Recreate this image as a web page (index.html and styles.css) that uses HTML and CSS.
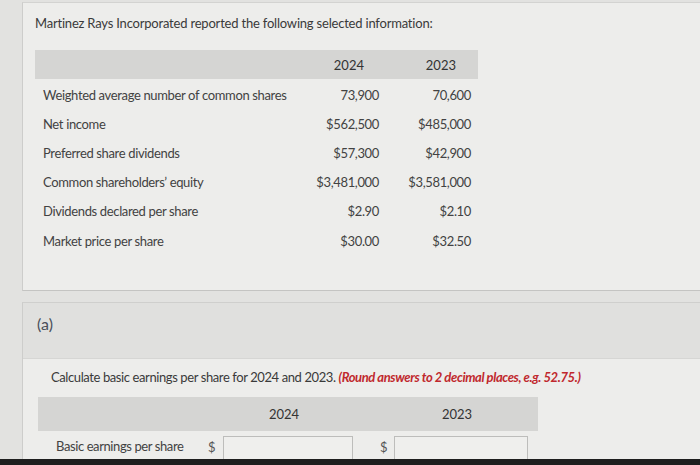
FILE: index.html
```html
<!DOCTYPE html>
<html>
<head>
<meta charset="utf-8">
<link rel="stylesheet" href="styles.css">
</head>
<body>
<div class="page">
  <div class="card info">
    <p class="title">Martinez Rays Incorporated reported the following selected information:</p>
    <div class="data">
      <div class="hdr"></div>
      <div class="hdr num h2024">2024</div>
      <div class="hdr num h2023">2023</div>

      <div class="lbl">Weighted average number of common shares</div>
      <div class="val v1">73,900</div>
      <div class="val v2">70,600</div>

      <div class="lbl">Net income</div>
      <div class="val v1">$562,500</div>
      <div class="val v2">$485,000</div>

      <div class="lbl">Preferred share dividends</div>
      <div class="val v1">$57,300</div>
      <div class="val v2">$42,900</div>

      <div class="lbl">Common shareholders’ equity</div>
      <div class="val v1">$3,481,000</div>
      <div class="val v2">$3,581,000</div>

      <div class="lbl">Dividends declared per share</div>
      <div class="val v1">$2.90</div>
      <div class="val v2">$2.10</div>

      <div class="lbl">Market price per share</div>
      <div class="val v1">$30.00</div>
      <div class="val v2">$32.50</div>
    </div>
  </div>

  <div class="card part">
    <div class="part-head">(a)</div>
    <div class="part-body">
      <p class="question">Calculate basic earnings per share for 2024 and 2023. <em class="hint">(Round answers to 2 decimal places, e.g. 52.75.)</em></p>
      <div class="answer">
        <div class="ahdr span2"></div>
        <div class="ahdr ayear">2024</div>
        <div class="ahdr span2"></div>
        <div class="ahdr ayear">2023</div>
        <div class="ahdr"></div>

        <div class="alabel">Basic earnings per share</div>
        <div class="dollar">$</div>
        <div class="box"></div>
        <div></div>
        <div class="dollar">$</div>
        <div class="box"></div>
        <div></div>
      </div>
    </div>
  </div>
</div>
<div class="bezel"></div>
</body>
</html>
```

FILE: styles.css
```css
html, body {
  margin: 0;
  padding: 0;
  height: 465px;
  overflow: hidden;
}
body {
  background: #e2e2e0;
  font-family: Lato, "Open Sans", sans-serif;
  color: #3f3f3f;
}
.page {
  padding: 2px 0 0 22px;
  display: flex;
  flex-direction: column;
  gap: 11px;
}
.card {
  background: #ededeb;
  border-left: 1px solid #cdcdcb;
}
.info {
  height: 289px;
  border-top: 1px solid #d3d3d1;
  border-bottom: 1px solid #c4c4c2;
  padding-left: 12px;
  box-sizing: border-box;
}
.title {
  margin: 11px 0 0 0;
  font-size: 13px;
  letter-spacing: -0.2px;
  line-height: 18px;
  color: #3a3a3a;
}
.data {
  margin-top: 18px;
  display: grid;
  grid-template-columns: 265px 91px 87px;
  grid-template-rows: 30px repeat(6, 29.2px);
  width: 443px;
  font-size: 13px;
  letter-spacing: -0.35px;
}
.hdr {
  background: #d5d5d3;
  display: flex;
  align-items: center;
  font-size: 13px;
  letter-spacing: 0;
  color: #333;
  margin-bottom: 1px;
}
.hdr.num { justify-content: flex-end; }
.h2024 { padding-right: 27px; }
.h2023 { padding-right: 22px; }
.lbl {
  padding-left: 8px;
  display: flex;
  align-items: center;
  color: #424242;
}
.val {
  display: flex;
  align-items: center;
  justify-content: flex-end;
  color: #424242;
}
.v1 { padding-right: 12px; }
.v2 { padding-right: 7px; }

.part {
  border-top: 1px solid #cfcfcd;
  flex: 1;
}
.part-head {
  height: 56px;
  background: #e0e0de;
  border-bottom: 1px solid #d6d6d4;
  padding: 11px 0 0 14px;
  box-sizing: border-box;
  font-size: 16px;
  color: #4a4f5a;
}
.part-body {
  padding: 9px 0 0 15px;
}
.question {
  margin: 0 0 0 13px;
  font-size: 13px;
  letter-spacing: -0.4px;
  line-height: 18px;
  color: #3a3a3a;
}
.hint {
  color: #c0282d;
  font-weight: bold;
  font-style: italic;
}
.answer {
  margin-top: 11px;
  display: grid;
  grid-template-columns: 163px 22px 130px 20px 21px 134px 10px;
  grid-template-rows: 39px 30px;
  width: 500px;
}
.ahdr {
  background: #d5d5d3;
  display: flex;
  align-items: center;
  justify-content: center;
  font-size: 13px;
  color: #333;
  margin-bottom: 5px;
}
.ahdr.span2 { grid-column: span 2; }
.ayear { padding-right: 8px; }
.alabel {
  padding-left: 18px;
  display: flex;
  align-items: center;
  font-size: 13px;
  letter-spacing: -0.4px;
  color: #424242;
  padding-bottom: 11px;
}
.dollar {
  display: flex;
  align-items: center;
  font-size: 13px;
  color: #555;
  padding-left: 7px;
  padding-bottom: 9px;
}
.box {
  border: 1px solid #bdbdbb;
  background: #efefed;
  height: 34px;
}
.bezel {
  position: fixed;
  left: 0;
  right: 0;
  bottom: 0;
  height: 6px;
  background: #1e1e1e;
}
```
